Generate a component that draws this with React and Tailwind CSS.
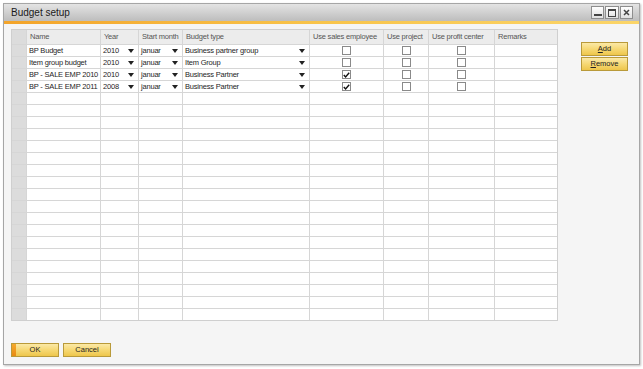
import React from "react";

const cols = [
  { key: "rh", w: "w-[15px]", label: "" },
  { key: "name", w: "w-[74px]", label: "Name" },
  { key: "year", w: "w-[38px]", label: "Year" },
  { key: "month", w: "w-[44px]", label: "Start month" },
  { key: "type", w: "w-[127px]", label: "Budget type" },
  { key: "sales", w: "w-[74px]", label: "Use sales employee" },
  { key: "project", w: "w-[45px]", label: "Use project" },
  { key: "profit", w: "w-[66px]", label: "Use profit center" },
  { key: "remarks", w: "w-[62px]", label: "Remarks" },
];

const rows = [
  { name: "BP Budget", year: "2010", month: "januar", type: "Business partner group", sales: false },
  { name: "Item group budget", year: "2010", month: "januar", type: "Item Group", sales: false },
  { name: "BP - SALE EMP 2010", year: "2010", month: "januar", type: "Business Partner", sales: true },
  { name: "BP - SALE EMP 2011", year: "2008", month: "januar", type: "Business Partner", sales: true },
];

const EMPTY_ROWS = 19;

function Arrow() {
  return (
    <svg width="6" height="4" viewBox="0 0 6 4" className="shrink-0">
      <path d="M0 0h6L3 4z" fill="#222" />
    </svg>
  );
}

function Combo({ value }) {
  return (
    <div className="flex h-full items-center justify-between pl-[2px] pr-[4px]">
      <span className="whitespace-nowrap">{value}</span>
      <Arrow />
    </div>
  );
}

function Check({ checked }) {
  return (
    <div className="flex h-full items-center justify-center">
      <div className="flex h-[9px] w-[9px] items-center justify-center border border-[#8a8a8a] bg-white">
        {checked ? (
          <svg width="7" height="6" viewBox="0 0 7 6">
            <path d="M0.8 3l1.8 1.9L6.2 0.8" stroke="#111" strokeWidth="1.4" fill="none" />
          </svg>
        ) : null}
      </div>
    </div>
  );
}

function YellowButton({ children, className = "", accent = false }) {
  return (
    <div
      className={`relative flex items-center justify-center border border-[#b99a3a] bg-gradient-to-b from-[#fbe9a6] via-[#f6d873] to-[#eec64a] text-[7.5px] text-[#222] ${className}`}
    >
      {accent ? <div className="absolute left-0 top-0 h-full w-[4px] bg-gradient-to-b from-[#f6a92b] to-[#e88a10]" /> : null}
      {children}
    </div>
  );
}

export default function App() {
  return (
    <div
      className="h-[369px] w-[643px] bg-white p-[3px]"
      style={{ fontFamily: '"Liberation Sans", Arial, sans-serif' }}
    >
      <div className="flex h-[362px] w-[637px] flex-col border border-[#a6a6a6] bg-[#f5f5f5] shadow-[1px_1px_2px_rgba(0,0,0,0.25)]">
        {/* title bar */}
        <div className="flex h-[17px] items-center justify-between bg-gradient-to-b from-[#e4e4e4] to-[#bdbdbd] pl-[7px] pr-[6px]">
          <span className="text-[10px] text-[#1a1a1a]">Budget setup</span>
          <div className="flex gap-[1px]">
            <div className="flex h-[13px] w-[13px] items-end justify-center border border-[#8e8e8e] bg-gradient-to-b from-white to-[#e0e0e0] pb-[2px]">
              <div className="h-[2px] w-[8px] bg-[#444]" />
            </div>
            <div className="flex h-[13px] w-[14px] items-center justify-center border border-[#8e8e8e] bg-gradient-to-b from-white to-[#e0e0e0]">
              <div className="h-[8px] w-[8px] border border-t-2 border-[#444]" />
            </div>
            <div className="flex h-[13px] w-[13px] items-center justify-center border border-[#8e8e8e] bg-gradient-to-b from-white to-[#e0e0e0]">
              <svg width="7" height="7" viewBox="0 0 7 7">
                <path d="M1 1l5 5M6 1l-5 5" stroke="#444" strokeWidth="1.5" />
              </svg>
            </div>
          </div>
        </div>
        <div className="h-[3px] bg-gradient-to-r from-[#f3a42a] via-[#f8c44a] to-[#fbd568]" />

        {/* content */}
        <div className="flex flex-1 flex-col px-[7px] pt-[5px]">
          <div className="flex">
            <div className="border border-[#cfcfcf] text-[7.5px] tracking-[-0.2px] text-[#1e1e1e]">
              {/* header */}
              <div className="flex h-[14px] bg-[#ececec] text-[#555]">
                {cols.map((c, i) => (
                  <div
                    key={c.key}
                    className={`${c.w} flex items-center overflow-hidden whitespace-nowrap border-[#d6d6d6] pl-[3px] ${i < cols.length - 1 ? "border-r" : ""} ${i === 0 ? "bg-[#dcdcdc]" : ""}`}
                  >
                    {c.label}
                  </div>
                ))}
              </div>
              {rows.map((r) => (
                <div key={r.name} className="flex h-[12px] border-t border-[#d6d6d6] bg-white">
                  <div className="w-[15px] border-r border-[#d6d6d6] bg-[#dcdcdc]" />
                  <div className="flex w-[74px] items-center overflow-hidden whitespace-nowrap border-r border-[#d6d6d6] pl-[2px]">{r.name}</div>
                  <div className="w-[38px] border-r border-[#d6d6d6]"><Combo value={r.year} /></div>
                  <div className="w-[44px] border-r border-[#d6d6d6]"><Combo value={r.month} /></div>
                  <div className="w-[127px] border-r border-[#d6d6d6]"><Combo value={r.type} /></div>
                  <div className="w-[74px] border-r border-[#d6d6d6]"><Check checked={r.sales} /></div>
                  <div className="w-[45px] border-r border-[#d6d6d6]"><Check checked={false} /></div>
                  <div className="w-[66px] border-r border-[#d6d6d6]"><Check checked={false} /></div>
                  <div className="w-[62px]" />
                </div>
              ))}
              {Array.from({ length: EMPTY_ROWS }).map((_, idx) => (
                <div key={idx} className="flex h-[12px] border-t border-[#d6d6d6] bg-white">
                  {cols.map((c, i) => (
                    <div
                      key={c.key}
                      className={`${c.w} border-[#d6d6d6] ${i < cols.length - 1 ? "border-r" : ""} ${i === 0 ? "bg-[#dcdcdc]" : ""}`}
                    />
                  ))}
                </div>
              ))}
            </div>

            <div className="ml-[23px] mt-[13px] flex flex-col gap-[1px]">
              <YellowButton className="h-[14px] w-[47px]">
                <span><span className="underline">A</span>dd</span>
              </YellowButton>
              <YellowButton className="h-[14px] w-[47px]">
                <span><span className="underline">R</span>emove</span>
              </YellowButton>
            </div>
          </div>

          <div className="mb-[7px] mt-auto flex gap-[4px]">
            <YellowButton accent className="h-[14px] w-[48px]">OK</YellowButton>
            <YellowButton className="h-[14px] w-[48px]">Cancel</YellowButton>
          </div>
        </div>
      </div>
    </div>
  );
}
